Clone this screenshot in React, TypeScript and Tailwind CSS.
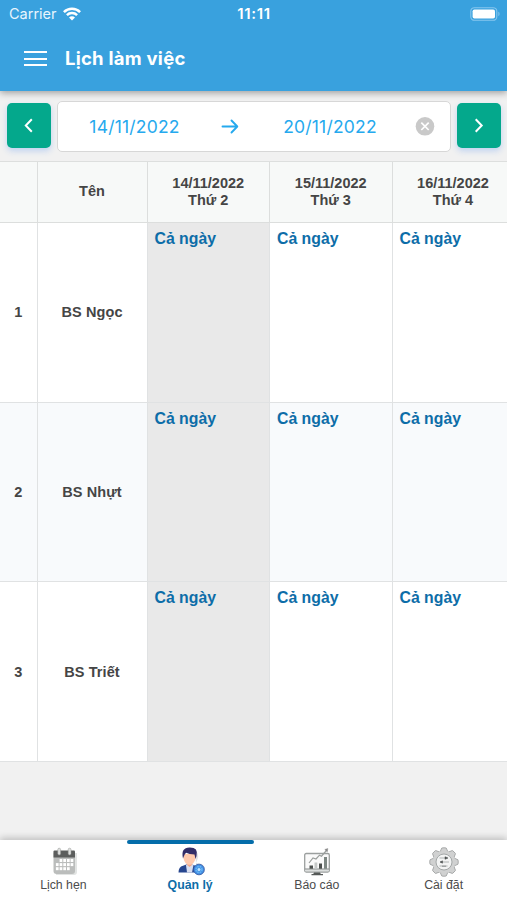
import React from "react";

const DAYS = [
  { date: "14/11/2022", label: "Thứ 2", today: true },
  { date: "15/11/2022", label: "Thứ 3", today: false },
  { date: "16/11/2022", label: "Thứ 4", today: false },
];

const STAFF = ["BS Ngọc", "BS Nhựt", "BS Triết"];

const GRID = "grid grid-cols-[37.500px_110px_122.500px_122.500px_122px] w-[514.500px] shrink-0";

function WifiIcon() {
  return (
    <svg width="18" height="14" viewBox="0 0 18 14" fill="none" stroke="#fff" strokeWidth="2.5">
      <path d="M.9 5.1C5.4.6 12.6.6 17.1 5.1" />
      <path d="M3.9 8.2c2.8-2.8 7.4-2.8 10.2 0" />
      <path d="M9 13.4 6 10.4c1.6-1.5 4.4-1.5 6 0z" fill="#fff" stroke="none" />
    </svg>
  );
}

function BatteryIcon() {
  return (
    <svg width="31" height="14" viewBox="0 0 31 14" fill="none">
      <rect x=".8" y=".7" width="26" height="12.6" rx="3.6" stroke="#86c6ee" strokeWidth="1.1" />
      <rect x="2.6" y="2.5" width="22.4" height="9" rx="1.8" fill="#fff" />
      <path d="M28.4 4.8c1.5.5 1.5 3.9 0 4.4z" fill="#86c6ee" />
    </svg>
  );
}

function CalendarIcon() {
  return (
    <svg width="30" height="30" viewBox="0 0 30 30">
      <path d="M8 6h21v19q0 3-3 3H8z" fill="#e2e4e3" />
      <path d="M5.500 5.500h21.500V24q0 3-3 3H8.500q-3 0-3-3z" fill="#bbbdbc" />
      <path d="M5.500 10.500V4.500q0-1 1-1H26q1 0 1 1v6z" fill="#5c5e5d" />
      <g fill="#dedfde" stroke="#929493" strokeWidth=".5">
        <rect x="9.800" y="1.200" width="2.800" height="6.800" rx="1.400" />
        <rect x="20.200" y="1.200" width="2.800" height="6.800" rx="1.400" />
      </g>
      <g fill="#fff">
        {[12, 16.1, 20.2].map((y, row) =>
          [7.9, 11.6, 15.3, 19, 22.6].map((x, col) =>
            (row === 0 && col === 0) || (row === 2 && col === 4) ? null : (
              <rect key={`${x}-${y}`} x={x} y={y} width="2.7" height="3" />
            ),
          ),
        )}
      </g>
    </svg>
  );
}

function ManagerIcon() {
  return (
    <svg width="30" height="30" viewBox="0 0 30 30">
      <path d="M20 4q4 2 3 7l-2 5 6 1q4 3 3 7-2 5-8 4z" fill="#e0e1e6" />
      <path d="M3.500 25.500q0-5.500 4.500-6.700l4-1.500h4.500l4 1.500q4.500 1.200 4.500 6.700z" fill="#27468f" />
      <path d="m11 18 2-1.300h3.500L18.500 18l-1.500 7.500h-5z" fill="#d9def0" />
      <path d="M12 14h5v4l-2.500 2-2.500-2z" fill="#f3a98b" />
      <path d="M8.500 7h12v4.500q-1.500 6.300-6 6.300t-6-6.300z" fill="#ffc9ad" />
      <path d="M8 11.500Q5.500.800 14.500.600q9.200-.2 7 8.400l-1 3-1-4.500q-5.500-.1-8.300-1.700-1.500 1.200-2 2.700z" fill="#332d68" />
      <circle cx="24" cy="22.500" r="5.300" fill="#438fe3" stroke="#345aa7" strokeWidth=".8" />
      <circle cx="24" cy="22.500" r="3" fill="none" stroke="#67b7f6" strokeWidth="1.500" strokeDasharray="1.600 .8" />
      <circle cx="24" cy="22.500" r="1.500" fill="#c4e8ff" />
    </svg>
  );
}

function ReportIcon() {
  return (
    <svg width="30" height="30" viewBox="0 0 30 30" fill="none">
      <rect x="2.700" y="6.500" width="24.600" height="18.500" rx="1.500" fill="#fafafa" stroke="#9b9f9e" strokeWidth="1.300" />
      <path d="M3.300 22.300h23.400v2H3.300z" fill="#dcdfde" />
      <path d="M3 22h24" stroke="#858988" />
      <path d="M12 25.500h6l.8 1.500H21v1.300H9.500V27h1.800z" fill="#555957" />
      <path d="M7.500 18.500H11v3.300H7.500zM17 16.500h3v5.300h-3z" fill="#4c504e" />
      <path d="M12.500 15.500h2.800v6.300h-2.800z" fill="#c5c8c7" />
      <path d="M22 10h3v11.800h-3z" fill="#7e8783" />
      <path d="m7 16 4-5 3 1 3.500-3.800 2 1 5.300-6.200" stroke="#9a9e9c" strokeWidth="1.200" />
      <path d="m22.800 2.500 3-.9-.5 3.200z" fill="#888" stroke="#888" strokeWidth=".5" />
    </svg>
  );
}

function SettingsIcon() {
  return (
    <svg width="30" height="30" viewBox="0 0 30 30" fill="none">
      <g fill="#d0d1d1" stroke="#a3a5a5" strokeWidth=".9">
        {[0, 45, 90, 135, 180, 225, 270, 315].map((angle) => (
          <path key={angle} d="M11 5 12.800 1q2.200-.5 4.400 0L19 5z" transform={`rotate(${angle} 15 15)`} />
        ))}
      </g>
      <circle cx="15" cy="15" r="11.300" fill="#d0d1d1" />
      <circle cx="15" cy="15" r="8" fill="#f3f4f4" stroke="#9ca0a0" strokeWidth=".9" />
      <path d="M10.500 11h8M11 15h9M10.500 19h8" stroke="#a9adad" strokeWidth=".9" />
      <path d="m16 9.700 3 1.300-3 1.300zM13.500 13.800v2.400L11 15z" fill="#4c5050" stroke="#4c5050" strokeWidth=".5" />
      <path d="M13 19.300h4" stroke="#a0a4a4" strokeWidth="1.400" />
    </svg>
  );
}

const TABS = [
  { label: "Lịch hẹn", Icon: CalendarIcon, active: false },
  { label: "Quản lý", Icon: ManagerIcon, active: true },
  { label: "Báo cáo", Icon: ReportIcon, active: false },
  { label: "Cài đặt", Icon: SettingsIcon, active: false },
];

function StepButton({ direction }: { direction: "prev" | "next" }) {
  return (
    <button className="mb-px flex h-[45px] w-11 shrink-0 items-center justify-center rounded-[5px] bg-[#04a88c] shadow-[0_3px_6px_#bfd2f0]">
      <svg width="20" height="20" viewBox="0 0 20 20" fill="none" stroke="#fff" strokeWidth="2">
        <path d={direction === "prev" ? "m12.800 3.300-6 6.200 6 6.200" : "m6.700 3.300 6 6.200-6 6.200"} />
      </svg>
    </button>
  );
}

export default function App() {
  return (
    <div className="flex h-[900px] w-[507px] flex-col overflow-hidden bg-[#f1f1f1] font-['Liberation_Sans',Arial,sans-serif]">
      <header className="relative z-10 h-[91px] shrink-0 bg-[#39a1de] font-['Inter',sans-serif] text-white shadow-[0_2px_7px_rgba(0,0,0,0.35)]">
        <div className="grid h-7 grid-cols-3 items-center pr-[6px] pl-[9px]">
          <div className="flex items-center gap-[6px] text-[14.5px] leading-5 text-[#e8f5fd]">
            <span>Carrier</span>
            <WifiIcon />
          </div>
          <span className="pr-0.5 text-center text-[15px] font-semibold tracking-[0.7px]">11:11</span>
          <div className="flex justify-end">
            <BatteryIcon />
          </div>
        </div>
        <div className="flex h-[61px] items-center gap-[18px] pl-6">
          <svg width="23" height="16" viewBox="0 0 23 16" stroke="#fff" strokeWidth="2">
            <path d="M0 1h23M0 8h23M0 14h23" />
          </svg>
          <h1 className="text-[18.5px] font-bold tracking-[0.25px]">Lịch làm việc</h1>
        </div>
      </header>

      <div className="flex h-[70px] shrink-0 items-center gap-[6px] pr-[6px] pl-[7px]">
        <StepButton direction="prev" />
        <div className="flex h-[51px] w-[394px] items-center rounded-[5px] border border-[#d7d7d7] bg-white font-['Inter',sans-serif] text-[17.5px] tracking-[0.2px] text-[#25a9ee]">
          <span className="w-[153px] pt-[2px] text-center">14/11/2022</span>
          <svg className="mx-[9px]" width="20" height="20" viewBox="0 0 20 20" fill="none" stroke="#25a9ee" strokeWidth="1.9" strokeLinecap="round" strokeLinejoin="round">
            <path d="M2.500 10.500h14.500M11.500 4.500l5.800 6-5.800 6" />
          </svg>
          <span className="w-[162px] pt-[2px] text-center">20/11/2022</span>
          <svg className="ml-[4px]" width="20" height="20" viewBox="0 0 20 20">
            <circle cx="10" cy="10.300" r="9.300" fill="#c9c9c9" />
            <path d="m6.300 6.600 7.400 7.400m0-7.400-7.400 7.400" stroke="#fff" strokeWidth="1.700" />
          </svg>
        </div>
        <StepButton direction="next" />
      </div>

      <main className="flex w-full shrink-0 flex-col overflow-hidden border-t border-[#dddfde] text-[14.5px] font-bold text-[#454545]">
        <div className={`${GRID} h-[61px] bg-[#f7f9f8]`}>
          <div className="border-r border-b border-[#dcdedd]" />
          <div className="flex items-center justify-center border-r border-b border-[#dcdedd]">Tên</div>
          {DAYS.map((day) => (
            <div key={day.date} className="flex flex-col items-center justify-center border-r border-b border-[#dcdedd] pb-px leading-[17px]">
              <span>{day.date}</span>
              <span>{day.label}</span>
            </div>
          ))}
        </div>
        {STAFF.map((name, index) => (
          <div key={name} className={`${GRID} h-[179.600px] ${index === 1 ? "bg-[#f8fafc]" : "bg-white"}`}>
            <div className="flex items-center justify-center border-r border-b border-[#e0e2e3] pt-[2px]">{index + 1}</div>
            <div className="flex items-center justify-center border-r border-b border-[#e0e2e3] pt-[2px] tracking-[0.1px]">{name}</div>
            {DAYS.map((day) => (
              <div
                key={day.date}
                className={`border-r border-b border-[#e0e2e3] pt-[6px] pl-[7px] text-[15.8px] leading-[19px] text-[#0d6da8] ${day.today ? "bg-[#e9e9e9]" : ""}`}
              >
                Cả ngày
              </div>
            ))}
          </div>
        ))}
      </main>

      <nav className="mt-auto grid h-[60px] shrink-0 grid-cols-4 bg-white shadow-[0_-2px_7px_rgba(0,0,0,0.22)]">
        {TABS.map(({ label, Icon, active }) => (
          <div key={label} className="flex flex-col items-center">
            <div className={`h-[4px] w-full shrink-0 rounded-full ${active ? "bg-[#046daa]" : ""}`} />
            <div className="mt-[3px]">
              <Icon />
            </div>
            <span className={`text-[12.3px] leading-[16px] ${active ? "font-bold text-[#0d6da8]" : "text-[#4c4c4c]"}`}>{label}</span>
          </div>
        ))}
      </nav>
    </div>
  );
}
